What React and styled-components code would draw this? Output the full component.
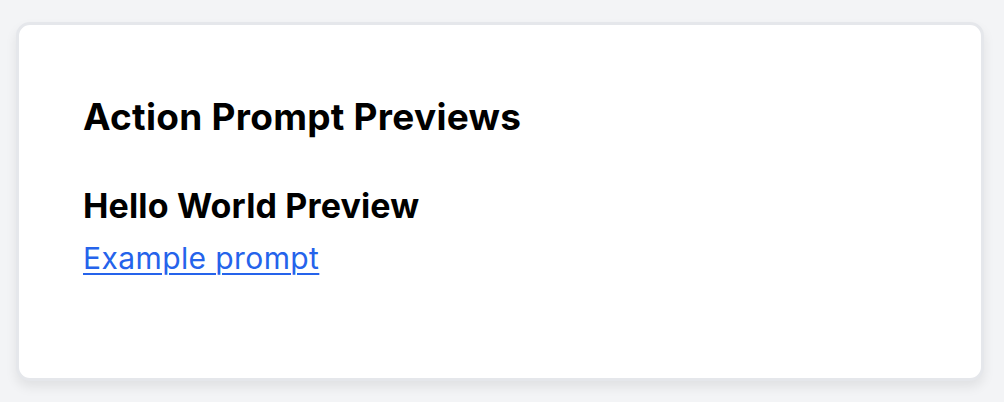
import styled, { createGlobalStyle } from 'styled-components';

const GlobalStyle = createGlobalStyle`
  html, body {
    margin: 0;
    background: #f3f4f6;
  }
  body {
    font-family: Inter, "Liberation Sans", sans-serif;
    -webkit-font-smoothing: antialiased;
  }
`;

const Page = styled.div`
  padding: 22px 20px 21px 16px;
  min-height: 402px;
  box-sizing: border-box;
`;

const Card = styled.section`
  background: #ffffff;
  border: 3px solid #e5e7eb;
  border-radius: 14px;
  box-shadow: 0 6px 12px rgba(0, 0, 0, 0.08);
  height: 359px;
  box-sizing: border-box;
  padding: 70px 64px 0 64px;
`;

const Title = styled.h1`
  margin: 0;
  font-size: 37px;
  line-height: 44px;
  font-weight: 700;
  letter-spacing: 0.27px;
  color: #000;
`;

const Preview = styled.div`
  margin-top: 46px;
  display: flex;
  flex-direction: column;
`;

const PreviewName = styled.h2`
  margin: 0;
  font-size: 34px;
  line-height: 42px;
  font-weight: 700;
  letter-spacing: 0.15px;
  color: #000;
`;

const PromptLink = styled.a`
  margin-top: 13px;
  font-size: 30px;
  line-height: 36px;
  letter-spacing: 0.4px;
  color: #2563eb;
  text-decoration: underline;
  text-decoration-thickness: 2px;
  text-underline-offset: 4px;
  align-self: flex-start;
`;

const App = () => {
  return (
    <>
      <GlobalStyle />
      <Page>
        <Card>
          <Title>Action Prompt Previews</Title>
          <Preview>
            <PreviewName>Hello World Preview</PreviewName>
            <PromptLink href="#">Example prompt</PromptLink>
          </Preview>
        </Card>
      </Page>
    </>
  );
};

export default App;
